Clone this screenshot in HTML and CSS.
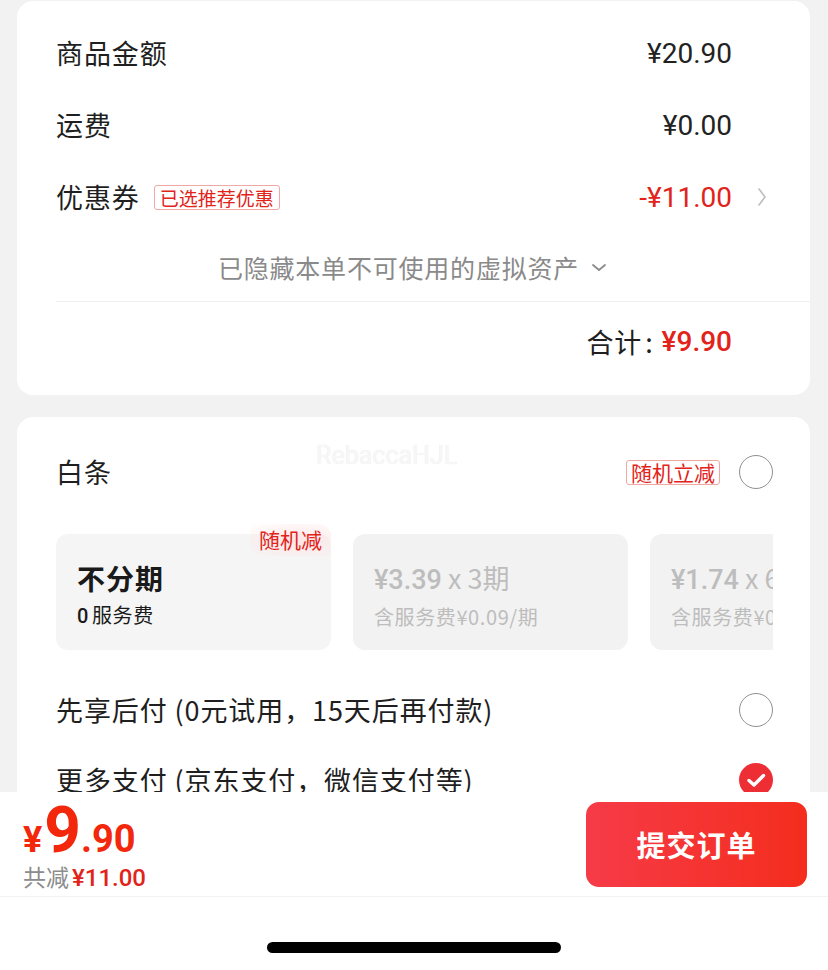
FILE: index.html
```html
<!DOCTYPE html>
<html lang="zh-CN">
<head>
    <meta charset="UTF-8">
    <meta name="viewport" content="width=device-width, initial-scale=1.0">
    <title>确认订单</title>
    <link rel="stylesheet" href="styles.css">
</head>
<body>

    <div class="content">
        <section class="card summary">
            <div class="row">
                <span class="label">商品金额</span>
                <span class="amount">¥20.90</span>
                <span class="tail"></span>
            </div>
            <div class="row">
                <span class="label">运费</span>
                <span class="amount">¥0.00</span>
                <span class="tail"></span>
            </div>
            <div class="row">
                <span class="label">优惠券</span>
                <span class="tag">已选推荐优惠</span>
                <span class="amount red">-¥11.00</span>
                <span class="tail">
                    <svg class="arrow" width="10" height="20" viewBox="0 0 10 20"><path d="M2 2 L8 10 L2 18" fill="none" stroke="#bdbdbd" stroke-width="1.6" stroke-linecap="round" stroke-linejoin="round"/></svg>
                </span>
            </div>
            <div class="hidden-assets">
                已隐藏本单不可使用的虚拟资产
                <svg width="16" height="9" viewBox="0 0 16 9"><path d="M2 2 L8 7 L14 2" fill="none" stroke="#8a8a8a" stroke-width="1.8" stroke-linecap="round" stroke-linejoin="round"/></svg>
            </div>
            <div class="total">合计<span class="colon">:</span><span class="amount red bold">¥9.90</span></div>
        </section>

        <section class="card pay">
            <span class="watermark">RebaccaHJL</span>
            <div class="option">
                <span class="label">白条</span>
                <span class="tag big">随机立减</span>
                <span class="radio"></span>
            </div>

            <div class="plans">
                <div class="plan active">
                    <span class="badge">随机减</span>
                    <div class="plan-title">不分期</div>
                    <div class="plan-sub"><span class="num">0</span>服务费</div>
                </div>
                <div class="plan">
                    <div class="plan-title"><b>¥3.39</b> x 3期</div>
                    <div class="plan-sub">含服务费¥0.09/期</div>
                </div>
                <div class="plan">
                    <div class="plan-title"><b>¥1.74</b> x 6期</div>
                    <div class="plan-sub">含服务费¥0.05/期</div>
                </div>
            </div>

            <div class="option first">
                <span class="label">先享后付 (0元试用，15天后再付款)</span>
                <span class="radio"></span>
            </div>
            <div class="option">
                <span class="label">更多支付 (京东支付，微信支付等)</span>
                <svg class="check" width="34" height="34" viewBox="0 0 34 34"><circle cx="17" cy="17" r="17" fill="#ee2e35"/><path d="M10 17.5 L15 22 L24.5 12.5" fill="none" stroke="#fff" stroke-width="3.4" stroke-linecap="round" stroke-linejoin="round"/></svg>
            </div>
        </section>
    </div>

    <footer class="bar">
        <div class="price">
            <div class="price-main"><span class="yen">¥</span><span class="int">9</span><span class="dec">.90</span></div>
            <div class="price-sub">共减<span class="red">¥11.00</span></div>
        </div>
        <button class="submit">提交订单</button>
    </footer>

    <div class="home"><span class="indicator"></span></div>

</body>
</html>
```

FILE: styles.css
```css
body {
    margin: 0;
    background: #f2f2f2;
    font-family: "Noto Sans CJK SC", sans-serif;
    color: #1f1f1f;
}

.content {
    height: 792px;
    overflow: hidden;
    padding: 1px 18px 0 17px;
    box-sizing: border-box;
}

.card {
    background: #fff;
    border-radius: 16px;
    padding: 16px 37px 14px 39px;
    position: relative;
}

.label {
    font-size: 27px;
    line-height: 36px;
    letter-spacing: 0.9px;
    white-space: nowrap;
}

.red {
    color: #e2231a;
}

.amount {
    margin-left: auto;
    font-family: Roboto, "Noto Sans CJK SC", sans-serif;
    font-size: 28px;
    font-weight: 400;
    color: #222;
}

.amount.red {
    color: #e2231a;
}

.bold {
    font-weight: 500;
}

.summary .row {
    display: flex;
    align-items: center;
    height: 72px;
}

.tail {
    width: 41px;
    display: flex;
    justify-content: flex-end;
    padding-right: 6px;
    box-sizing: border-box;
}

.tag {
    margin-left: 14px;
    border: 1px solid #f0a8a4;
    border-radius: 3px;
    color: #e2231a;
    font-size: 19px;
    line-height: 23px;
    padding: 0 5px;
}

.tag.big {
    margin-left: auto;
    font-size: 21px;
    padding: 0 4px;
}

.hidden-assets {
    height: 68px;
    display: flex;
    align-items: center;
    justify-content: center;
    gap: 12px;
    padding-right: 4px;
    font-size: 25px;
    letter-spacing: 0.8px;
    color: #8a8a8a;
}

.total {
    height: 79px;
    margin-right: -37px;
    padding-right: 78px;
    border-top: 1px solid #efefef;
    display: flex;
    align-items: center;
    justify-content: flex-end;
    font-size: 27px;
    letter-spacing: 0.9px;
}

.total .colon {
    margin: 0 8px 0 3px;
}

.total .amount {
    margin-left: 0;
    letter-spacing: 0;
}

.pay {
    margin-top: 22px;
    padding: 20px 37px 0 39px;
}

.watermark {
    position: absolute;
    left: 299px;
    top: 24px;
    font-family: Roboto, sans-serif;
    font-size: 25px;
    font-weight: 400;
    color: #f7f7f7;
    text-shadow: 0 0 1px rgba(0, 0, 0, 0.1);
}

.option {
    display: flex;
    align-items: center;
    justify-content: space-between;
    height: 70px;
}

.option.first {
    margin-top: 25px;
}

.option .tag + .radio {
    margin-left: 19px;
}

.radio {
    width: 32px;
    height: 32px;
    border: 1.5px solid #8f8f8f;
    border-radius: 50%;
    flex-shrink: 0;
}

.plans {
    display: flex;
    gap: 22px;
    overflow: hidden;
    padding-top: 10px;
    margin-top: 17px;
}

.plan {
    flex: 0 0 275px;
    height: 116px;
    box-sizing: border-box;
    padding: 26px 21px 0;
    background: #f2f2f2;
    border-radius: 12px;
    color: #bdbdbd;
    position: relative;
    white-space: nowrap;
}

.plan.active {
    background: #f5f5f5;
    color: #1a1a1a;
}

.plan-title {
    font-size: 27px;
    line-height: 36px;
}

.plan-title b {
    font-family: Roboto, sans-serif;
    font-weight: 500;
}

.plan.active .plan-title {
    font-weight: 700;
    font-size: 28px;
    letter-spacing: 1px;
}

.plan-sub {
    margin-top: 5px;
    font-size: 20px;
    line-height: 28px;
    letter-spacing: 0.6px;
}

.plan-sub .num {
    font-family: Roboto, sans-serif;
    font-weight: 500;
    margin-right: 3px;
}

.badge {
    position: absolute;
    top: -10px;
    right: 0;
    padding: 2px 9px 4px;
    font-size: 21px;
    line-height: 26px;
    color: #e2231a;
    border-radius: 0 12px 0 12px;
    background: radial-gradient(ellipse at 60% 50%, #fde6e6 0%, rgba(253, 230, 230, 0.4) 60%, rgba(255, 255, 255, 0) 100%);
}

.check {
    flex-shrink: 0;
}

.bar {
    height: 105px;
    background: #fff;
    border-bottom: 1px solid #f2f2f2;
    box-sizing: border-box;
    display: flex;
    align-items: center;
    justify-content: space-between;
    padding: 0 21px 0 23px;
}

.price {
    margin-top: 10px;
}

.price-main {
    color: #f2270c;
    font-family: Roboto, sans-serif;
    font-weight: 700;
    line-height: 52px;
    height: 52px;
}

.yen {
    font-size: 36px;
}

.int {
    font-size: 64px;
    margin-left: 2px;
}

.dec {
    font-size: 38px;
}

.price-sub {
    margin-top: 4px;
    font-size: 23px;
    line-height: 30px;
    color: #8c8c8c;
}

.price-sub .red {
    font-family: Roboto, sans-serif;
    font-size: 24px;
    font-weight: 500;
    margin-left: 3px;
}

.submit {
    width: 221px;
    height: 85px;
    border: none;
    border-radius: 13px;
    background: linear-gradient(90deg, #f63b48, #f42d1d);
    color: #fff;
    font-family: "Noto Sans CJK SC", sans-serif;
    font-size: 29px;
    font-weight: 700;
    letter-spacing: 1px;
}

.home {
    height: 73px;
    background: #fff;
    display: flex;
    justify-content: center;
}

.indicator {
    width: 294px;
    height: 11px;
    margin-top: 45px;
    border-radius: 6px;
    background: #000;
}
```
